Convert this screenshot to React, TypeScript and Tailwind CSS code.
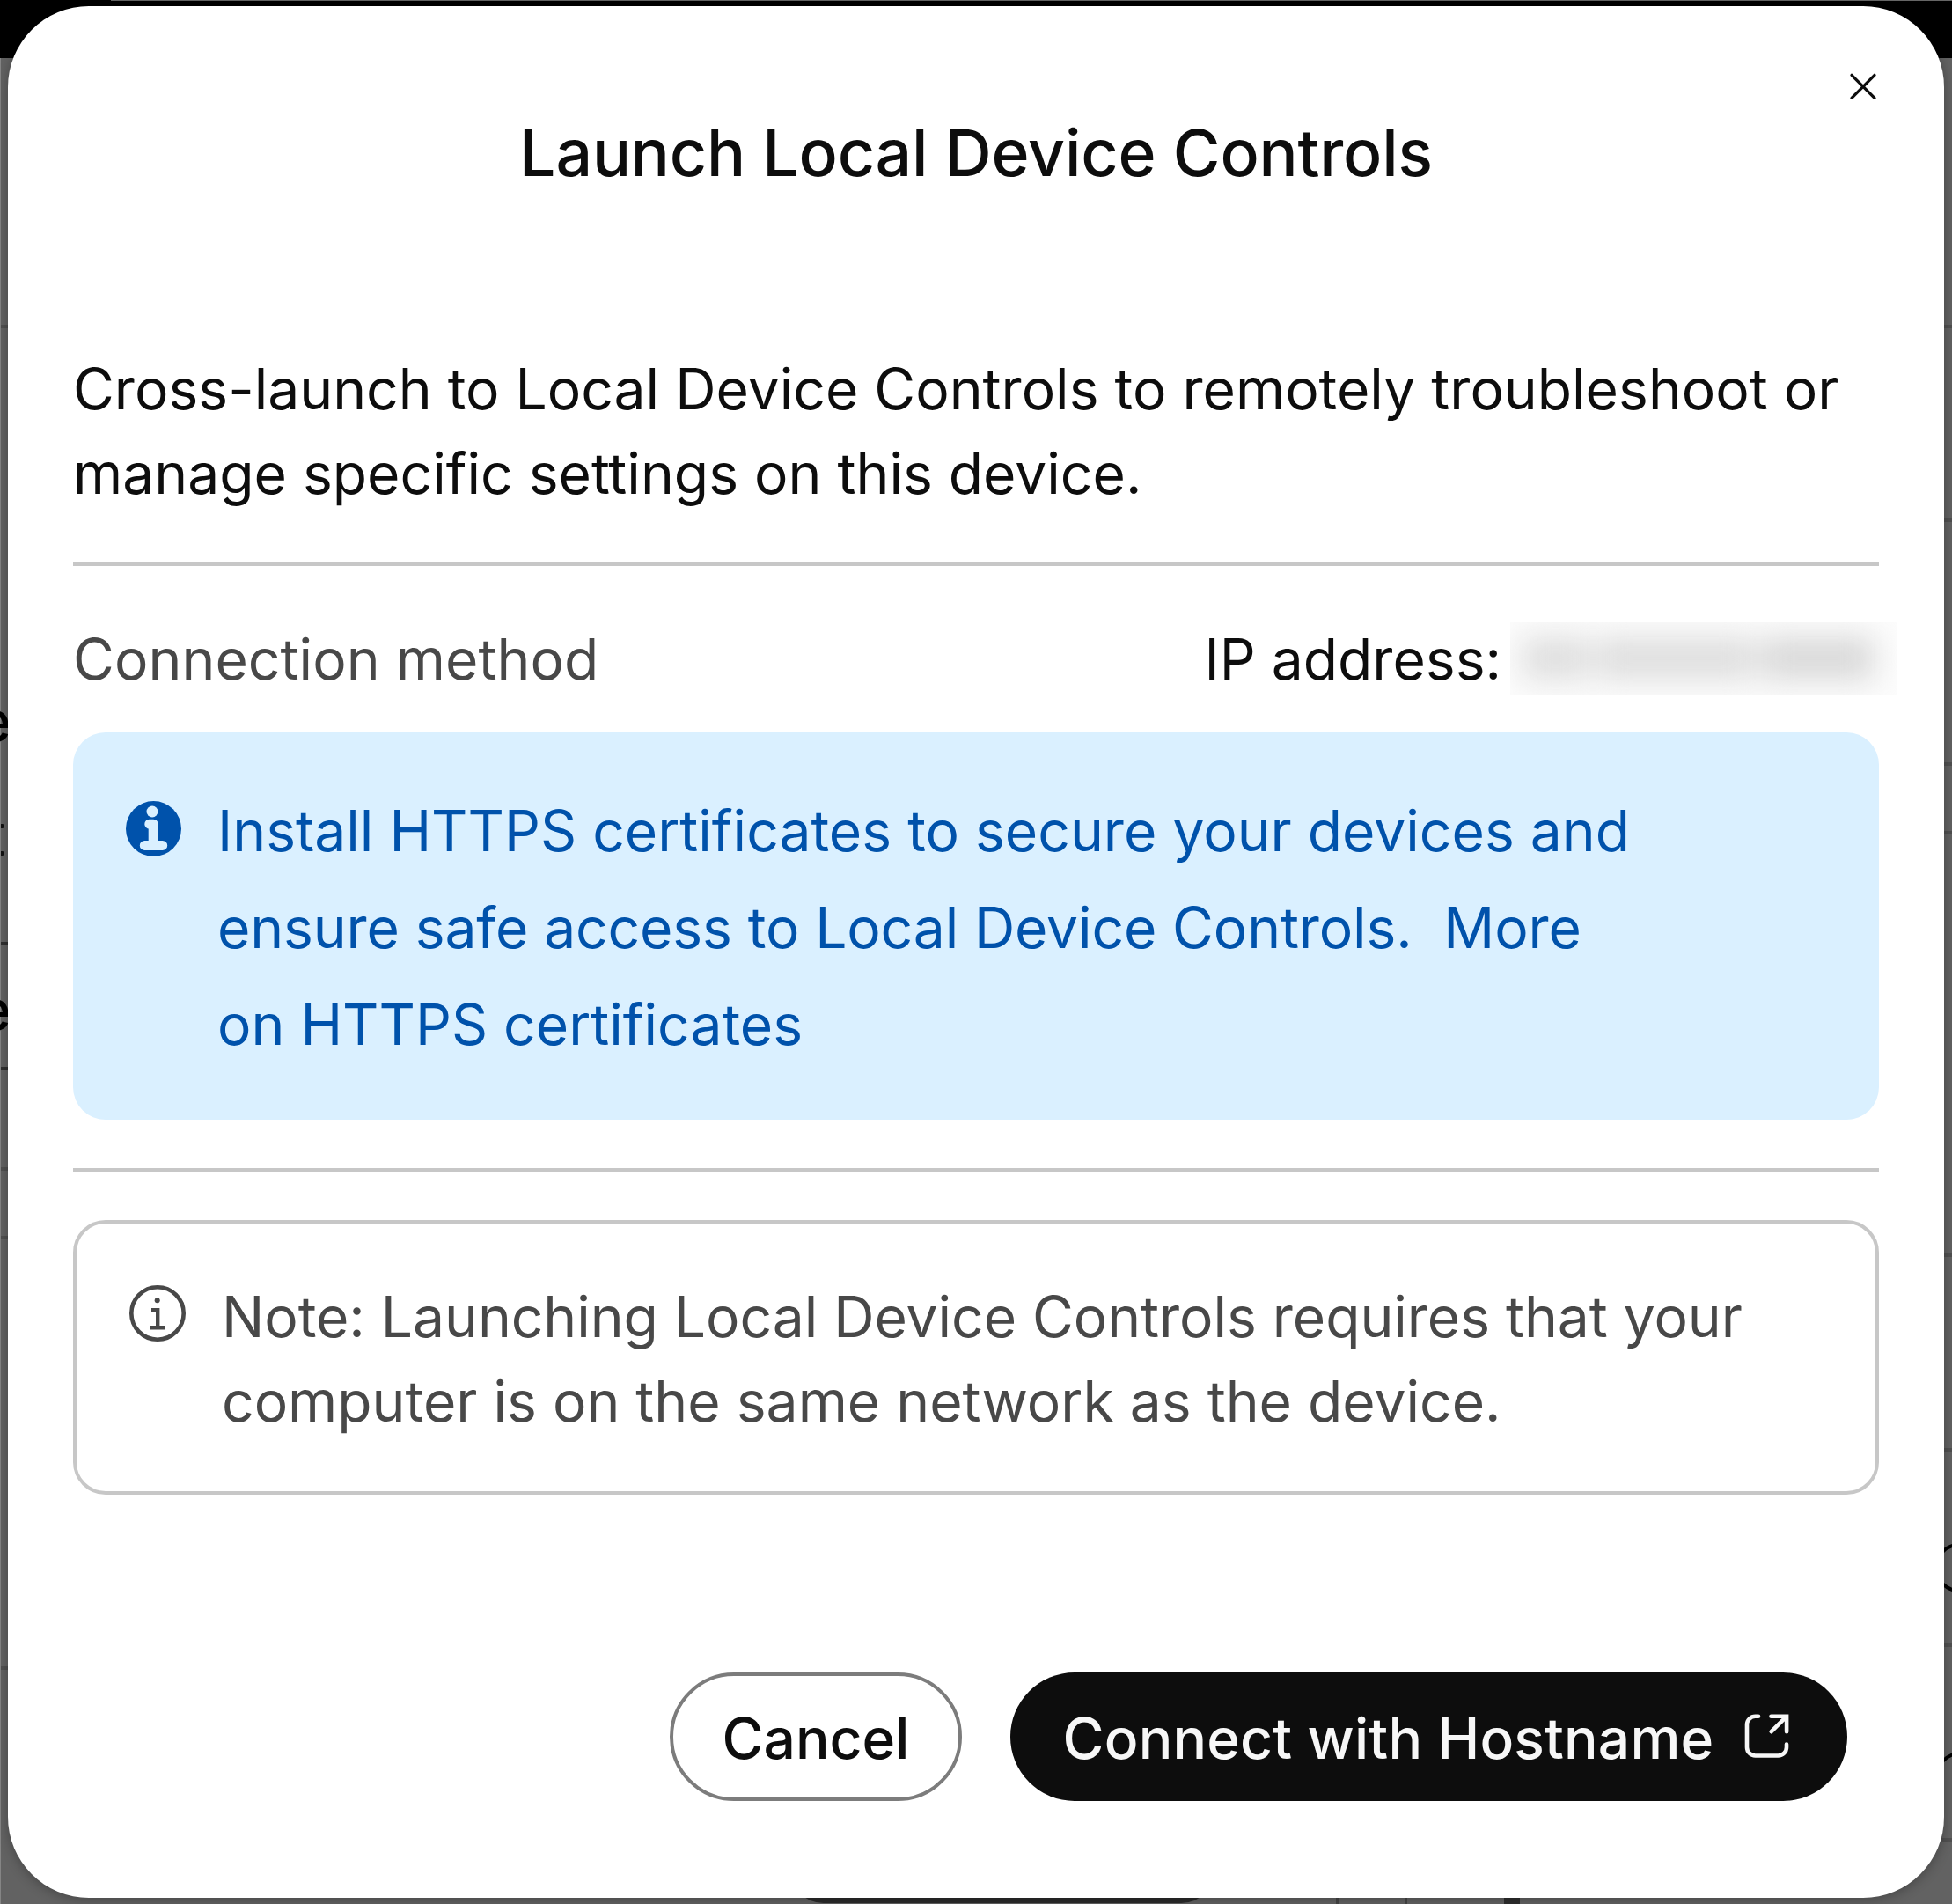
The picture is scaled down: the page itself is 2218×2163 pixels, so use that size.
import React from "react";

function InfoFilled() {
  return (
    <svg className="mt-[21px] h-[64px] w-[64px] shrink-0" viewBox="0 0 64 64">
      <circle cx="31.500" cy="31.500" r="31.500" fill="#0052ab" />
      <circle cx="30" cy="12" r="6.500" fill="#daf0ff" />
      <path
        d="M26.800 26.200H31.200V50M21.300 50.400H41.700"
        fill="none"
        stroke="#daf0ff"
        strokeWidth="11"
        strokeLinecap="round"
        strokeLinejoin="round"
      />
    </svg>
  );
}

function InfoOutline() {
  return (
    <svg className="mt-[12px] h-[64px] w-[64px] shrink-0" viewBox="0 0 64 64">
      <circle cx="32" cy="32" r="29.700" fill="none" stroke="#484848" strokeWidth="4.600" />
      <circle cx="31.700" cy="17.300" r="3" fill="#484848" />
      <path d="M25 28.300H32.200V48.300M23.300 48.300H41" fill="none" stroke="#484848" strokeWidth="4.400" />
    </svg>
  );
}

function LaunchIcon() {
  return (
    <svg
      className="h-[53px] w-[53px] shrink-0"
      viewBox="0 0 53 53"
      fill="none"
      stroke="#f7f7f7"
      strokeWidth="4.600"
      strokeLinecap="round"
    >
      <path d="M17 3.800H13.500A9.500 9.500 0 0 0 4 13.300V39A9.500 9.500 0 0 0 13.500 48.500H39.500A9.500 9.500 0 0 0 49 39V35.500" />
      <path d="M31.500 3.800H49.100V21.200M49 3.900L31.700 21.200" />
    </svg>
  );
}

function Divider() {
  return <div className="h-[4px] shrink-0 bg-[#c7c7c7]" />;
}

const row = "shrink-0 border-b-4 border-[#505050]";
const darkRow = "shrink-0 border-b-4 border-[#303030]";

/* The dimmed page behind the dialog, of which only the edges show. */
function Backdrop() {
  return (
    <div aria-hidden="true" className="absolute inset-0 flex flex-col">
      <div className="flex h-[66px] shrink-0 justify-end bg-black">
        <div className="h-px w-[2092px] bg-[#666666]" />
      </div>
      <div className="flex h-[2097px] shrink-0">
        <div className="flex flex-1 flex-col border-l border-[#858585] text-[64px] font-medium leading-[96px] text-black">
          <div className={`${row} h-[307px]`} />
          <div className={`${darkRow} h-[701px] pt-[398px]`}>
            <p className="-ml-[26px]">e</p>
            <div className="mt-[69px] h-[5px] w-[4px] rounded-r-full bg-[#111111]" />
            <div className="mt-[26px] h-[5px] w-[4px] rounded-r-full bg-[#111111]" />
          </div>
          <div className={`${darkRow} h-[142px] pt-[25px]`}>
            <p className="-ml-[26px]">e</p>
          </div>
          <div className={`${row} h-[114px]`} />
          <div className={`${row} h-[78px]`} />
          <div className={`${row} h-[489px]`} />
          <div className="flex flex-1 items-end justify-end pb-px">
            <div className="mr-[-272px] h-[90px] w-[486px] shrink-0 rounded-[40px] bg-[#2b2b2b]" />
          </div>
        </div>
        <div className="flex flex-1 flex-col">
          <div className={`${row} h-[307px]`} />
          <div className={`${row} h-[220px]`} />
          <div className={`${row} h-[277px]`} />
          <div className={`${row} h-[78px]`} />
          <div className={`${row} h-[480px]`} />
          <div className={`${row} h-[221px]`} />
          <div className={`${row} flex h-[222px] justify-end pt-[104px]`}>
            <div className="mr-[-36px] h-[56px] w-[56px] rounded-full border-4 border-black" />
          </div>
          <div className={`${row} flex h-[221px] justify-end pt-[119px]`}>
            <div className="mr-[-37px] h-[28px] w-[56px] rounded-t-full border-4 border-b-0 border-black" />
          </div>
          <div className="flex flex-1 pl-[408px]">
            <div className="w-[3px] bg-[#454545]" />
            <div className="ml-[75px] w-[3px] bg-[#454545]" />
            <div className="ml-[110px] w-[18px] bg-[#2e2e2e]" />
          </div>
        </div>
      </div>
    </div>
  );
}

function RedactedAddress() {
  return (
    <div className="mb-[2px] ml-[10px] h-[82px] w-[439px] overflow-hidden bg-[#fcfcfc]">
      <div className="flex h-full items-center gap-[8px] pl-[14px] pr-[26px] blur-[17px]">
        <div className="h-[48px] w-[76px] bg-[#dedede]" />
        <div className="h-[48px] w-[180px] bg-[#dedede]" />
        <div className="h-[48px] flex-1 bg-[#d8d8d8]" />
      </div>
    </div>
  );
}

export default function App() {
  return (
    <div className="relative h-[2163px] w-[2218px] overflow-hidden bg-[#626262] px-[9px] py-[7px] font-['Inter',sans-serif]">
      <Backdrop />
      <main className="relative flex h-[2149px] w-[2200px] flex-col rounded-[92px] bg-white px-[74px] text-[64.170px] leading-[96.250px] text-[#0d0d0d] shadow-[0_2px_14px_rgba(0,0,0,0.3)]">
        <header className="flex flex-col pt-[74px]">
          <button aria-label="Close" className="mr-px h-[34px] w-[34px] self-end">
            <svg viewBox="0 0 34 34" className="h-full w-full" stroke="#0d0d0d" strokeWidth="3.300" strokeLinecap="round">
              <path d="M4 4.300L30 30.300M30 4.300L4 30.300" />
            </svg>
          </button>
          <h1 className="mt-[4px] text-center text-[73.340px] font-medium leading-[110px] tracking-[-0.160px]">
            Launch Local Device Controls
          </h1>
        </header>

        <p className="mb-[52px] mt-[165px] whitespace-nowrap">
          Cross-launch to Local Device Controls to remotely troubleshoot or
          <br />
          manage specific settings on this device.
        </p>

        <Divider />

        <div className="mb-[35px] mr-[-20px] mt-[58px] flex items-center whitespace-nowrap">
          <span className="flex-1 tracking-[0.060px] text-[#484848]">Connection method</span>
          <span>IP address:</span>
          <RedactedAddress />
        </div>

        <section className="flex gap-[40px] whitespace-nowrap rounded-[37px] bg-[#daf0ff] pb-[53px] pl-[60px] pt-[57px] leading-[110px] text-[#0052ab]">
          <InfoFilled />
          <p>
            Install HTTPS certificates to secure your devices and
            <br />
            <span className="tracking-[-0.140px]">ensure safe access to Local Device Controls.&nbsp; More</span>
            <br />
            on HTTPS certificates
          </p>
        </section>

        <div className="mb-[55px] mt-[55px]">
          <Divider />
        </div>

        <section className="flex gap-[41px] whitespace-nowrap rounded-[37px] border-[4px] border-[#c7c7c7] pb-[54px] pl-[60px] pt-[58px] text-[#484848]">
          <InfoOutline />
          <p>
            <span className="tracking-[-0.050px]">Note: Launching Local Device Controls requires that your</span>
            <br />
            computer is on the same network as the device.
          </p>
        </section>

        <div className="mb-[110px] mr-[36px] mt-auto flex justify-end gap-[55px] font-medium">
          <button className="flex h-[146.500px] w-[332px] items-center justify-center rounded-full border-[4px] border-[#7c7c7c] bg-white pl-px pt-[4px]">
            Cancel
          </button>
          <button className="flex h-[146.500px] w-[951.500px] items-center justify-between rounded-full bg-[#0d0d0d] pl-[60px] pr-[65px] tracking-[0.180px] text-[#f7f7f7]">
            <span className="pt-[4px]">Connect with Hostname</span>
            <LaunchIcon />
          </button>
        </div>
      </main>
    </div>
  );
}
